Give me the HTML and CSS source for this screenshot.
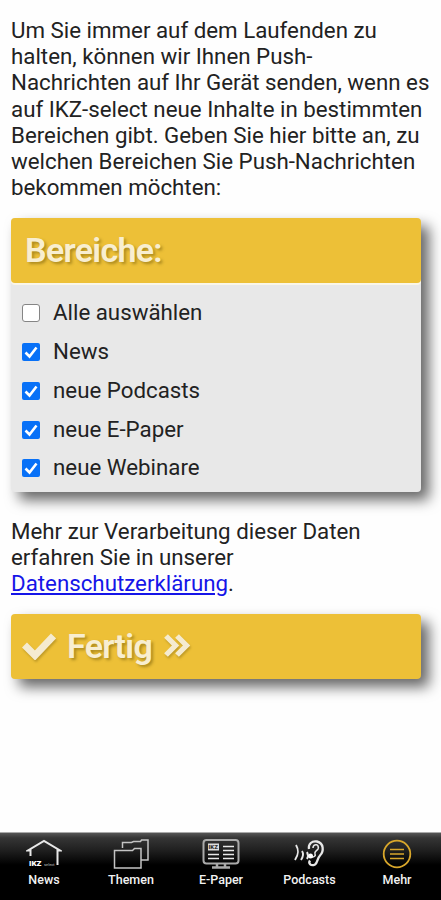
FILE: index.html
```html
<!DOCTYPE html>
<html lang="de">
<head>
<meta charset="utf-8">
<title>Push-Nachrichten</title>
<link rel="stylesheet" href="styles.css">
</head>
<body>
<main class="content">
  <p class="text">Um Sie immer auf dem Laufenden zu<br>halten, können wir Ihnen Push-<br>Nachrichten auf Ihr Gerät senden, wenn es<br>auf IKZ-select neue Inhalte in bestimmten<br>Bereichen gibt. Geben Sie hier bitte an, zu<br>welchen Bereichen Sie Push-Nachrichten<br>bekommen möchten:</p>
  <section class="card">
    <h2 class="card-title">Bereiche:</h2>
    <div class="options">
      <label class="option"><span class="box"></span><span>Alle auswählen</span></label>
      <label class="option"><span class="box checked"><svg viewBox="0 0 18 18"><path d="M3.5 9.5l4 4 7-9"/></svg></span><span>News</span></label>
      <label class="option"><span class="box checked"><svg viewBox="0 0 18 18"><path d="M3.5 9.5l4 4 7-9"/></svg></span><span>neue Podcasts</span></label>
      <label class="option"><span class="box checked"><svg viewBox="0 0 18 18"><path d="M3.5 9.5l4 4 7-9"/></svg></span><span>neue E-Paper</span></label>
      <label class="option"><span class="box checked"><svg viewBox="0 0 18 18"><path d="M3.5 9.5l4 4 7-9"/></svg></span><span>neue Webinare</span></label>
    </div>
  </section>
  <p class="text privacy">Mehr zur Verarbeitung dieser Daten<br>erfahren Sie in unserer<br><a href="#">Datenschutzerklärung</a>.</p>
  <button class="done" type="button">
    <svg class="check" viewBox="0 0 34 28"><path d="M2.5 13l10.500 10.500L31.500 4"/></svg>
    <span class="done-label">Fertig</span>
    <svg class="chevrons" viewBox="0 0 28 24"><path d="M3 2l9.500 9.500L3 21M14 2l9.500 9.500L14 21"/></svg>
  </button>
</main>
<nav class="tabs">
  <a class="tab news">
    <svg viewBox="0 0 36 32"><path d="M4.500 17v-5.500H2L18 2l16 9.500h-2.500V26" stroke-width="2"/><text x="3" y="26.500" class="logo">IKZ</text><text x="18" y="26.500" class="tiny">select</text></svg>
    <span>News</span>
  </a>
  <a class="tab themes">
    <svg viewBox="0 0 36 32"><path d="M9.500 9V3.500h9l2-1h7l1-1.500h6.500v20H28M1.500 11.500h18l2-2h6.500V29H1.500z" stroke="#c4c4c4" stroke-width="1.500"/></svg>
    <span>Themen</span>
  </a>
  <a class="tab paper">
    <svg viewBox="0 0 38 32"><rect x="1.500" y="1" width="35" height="23.500" rx="3" stroke="#aaa" stroke-width="2"/><path d="M15 25v3M23 25v3M10 28.500h18" stroke="#aaa" stroke-width="2.500"/><rect x="6" y="4.500" width="11" height="7" fill="#ddd" stroke="none"/><text x="6.500" y="10.400" class="screen-logo">IKZ</text><path d="M21 7.500h11M21 11.500h11M21 15.500h11M21 19.500h11M6 15.500h11M6 19.500h11" stroke-width="1.300"/></svg>
    <span>E-Paper</span>
  </a>
  <a class="tab podcasts">
    <svg viewBox="0 0 36 32"><path d="M4 6c3 5 3 9-1 15M10 12c2 3 1 6-1 9M15 13c1 2 1 5 0 7" stroke-width="1.900"/><path d="M17 10C16 5 20 1.500 25 2.500c7 1.500 7 10 3 14-3 3-2 7-5 9-4 2-7-1-5-4" stroke-width="2.300"/><path d="M21 9c0-5 7-4 5 1-1 2-4 2-3 5 1 2-1 3-3 3" stroke-width="1.600"/><circle cx="18.500" cy="17" r="2.500" fill="#fff" stroke="none"/></svg>
    <span>Podcasts</span>
  </a>
  <a class="tab more">
    <svg viewBox="0 0 32 32"><circle cx="16" cy="15" r="13.300" stroke-width="1.800"/><path d="M9 10.500h14M9 15h14M9 19.500h14" stroke-width="1.600"/></svg>
    <span>Mehr</span>
  </a>
</nav>
</body>
</html>
```
FILE: styles.css
```css
* { box-sizing: border-box; }
body {
  margin: 0;
  height: 900px;
  display: flex;
  flex-direction: column;
  background: #fefefe;
  color: #222;
  font-family: Roboto, sans-serif;
  font-size: 22.3px;
  overflow: hidden;
}
.content { flex: 1; padding: 17px 20px 0 11px; }
.text { margin: 0; line-height: 26.2px; white-space: nowrap; }
.card {
  margin-top: 18px;
  height: 274px;
  border-radius: 4px;
  background: #e8e8e8;
  box-shadow: 8px 8px 14px rgba(0, 0, 0, .6);
}
.card-title {
  margin: 0;
  height: 65px;
  padding-left: 14px;
  border-radius: 4px;
  background: #edc037;
  box-shadow: 0 2px 0 #faf6e8;
  color: #f8eed0;
  font-size: 34px;
  font-weight: 600;
  letter-spacing: -.7px;
  line-height: 64px;
  text-shadow: 2px 2px 3px rgba(90, 70, 0, .45);
}
.options { padding: 9px 11px; }
.option { display: flex; align-items: center; height: 38.9px; }
.box {
  width: 18px;
  height: 18px;
  margin: 2px 13px 0 0;
  border: 1px solid #858585;
  border-radius: 3px;
  background: #fff;
  flex: none;
}
.box.checked { border: 0; background: #0871f7; border-radius: 2px; }
.box svg { display: block; fill: none; stroke: #fff; stroke-width: 2.6; }
.privacy { margin-top: 25.3px; }
.privacy a { color: #1515e8; text-decoration-thickness: 1.5px; text-underline-offset: 2px; }
.done {
  width: 100%;
  height: 65px;
  margin-top: 17.3px;
  padding: 0 11px;
  display: flex;
  align-items: center;
  border: 0;
  border-radius: 4px;
  background: #edc037;
  box-shadow: 8px 8px 14px rgba(0, 0, 0, .6);
  color: #f8eed0;
  font: 600 34px/64px Roboto, sans-serif;
  letter-spacing: -.7px;
  text-shadow: 2px 2px 3px rgba(90, 70, 0, .45);
}
.done svg { fill: none; stroke: #f5ebd0; filter: drop-shadow(1px 2px 1px rgba(90, 70, 0, .3)); }
.check { width: 34px; height: 28px; stroke-width: 7; }
.done-label { margin-left: 11px; }
.chevrons { width: 28px; height: 24px; margin-left: 11px; stroke-width: 5.3; }
.tabs {
  height: 68px;
  display: grid;
  grid-template-columns: 88px 86px 94px 83px 92px;
  border-top: 1px solid #aaa;
  background: linear-gradient(#555 0, #353535 5px, #202020 17px, #000 32px);
}
.tab {
  display: flex;
  flex-direction: column;
  align-items: center;
  padding-top: 6px;
  color: #f2f2f2;
  font-size: 12.5px;
  font-weight: 500;
  line-height: 18px;
}
.tab svg { height: 32px; fill: none; stroke: #e8e8e8; }
.tab .logo { font: 900 8px Roboto, sans-serif; fill: #fff; stroke: none; }
.tab .tiny { font: 4px Roboto, sans-serif; fill: #bbb; stroke: none; }
.tab .screen-logo { font: 900 6px Roboto, sans-serif; fill: #333; stroke: none; }
.more svg { stroke: #d9a72b; }
```
